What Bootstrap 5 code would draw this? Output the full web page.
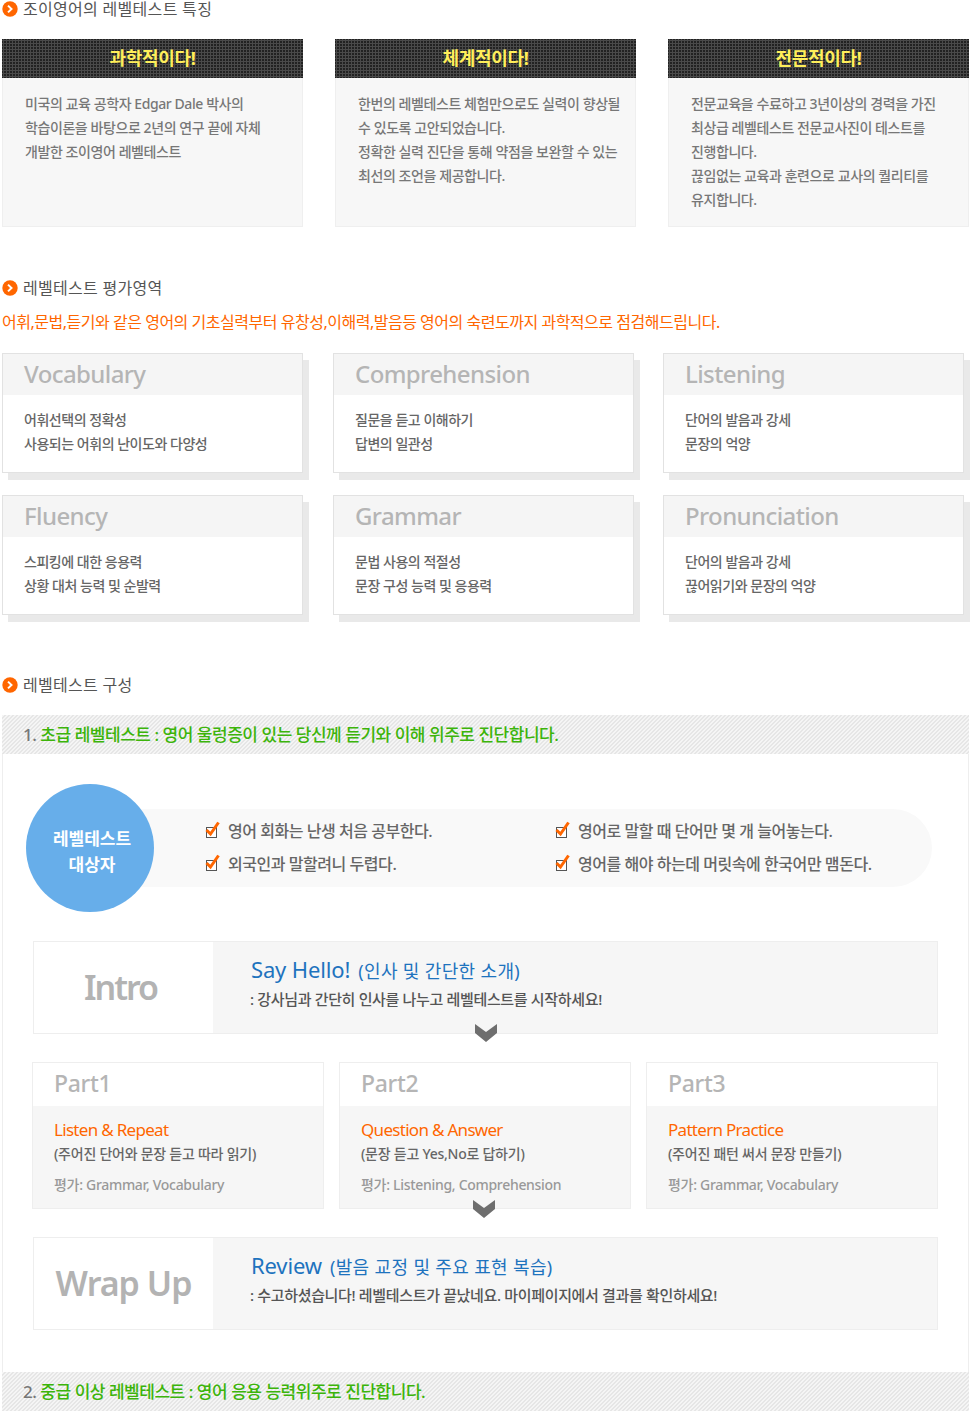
<!DOCTYPE html>
<html lang="ko">
<head>
<meta charset="utf-8">
<title>레벨테스트</title>
<link rel="stylesheet" href="https://cdn.jsdelivr.net/npm/bootstrap@5.3.0/dist/css/bootstrap.min.css">
<style>
body{margin:0;background:#fff;font-family:"Noto Sans","Noto Sans CJK KR",sans-serif;color:#666;width:970px;overflow-x:hidden}
.pg{padding:0 1px 3px 2px}
.sec-t{height:18px;gap:5px;font-size:16px;line-height:18px;color:#555;letter-spacing:.3px}
.sec-t svg{width:16px;height:16px;flex:none}
.feat-row{gap:32px;margin-top:21px}
.feat{width:301px;height:188px;border:0;border-radius:0;background:#f7f7f7;box-shadow:inset 0 0 0 1px #efefef}
.card-header.feat-h{height:39px;border:0;border-radius:0;padding:0;background-color:#222;background-image:radial-gradient(#4a4a4a 1px,transparent 1.2px);background-size:3px 3px;color:#ffef5a;font-size:18px;font-weight:700;line-height:38px;text-align:center;letter-spacing:-.3px}
.feat-b{padding:14px 10px 0 23px;font-size:14px;line-height:24px;letter-spacing:-.42px;color:#777;font-weight:500}
.t2{margin-top:52px}
.lead-o{margin:16px 0 0;height:18px;font-size:16px;line-height:18px;color:#f60;letter-spacing:-.48px;white-space:nowrap;font-weight:400}
.ev-grid{display:grid;grid-template-columns:331px 330px 301px;row-gap:22px;margin-top:22px}
.ev{width:301px;height:120px;border:1px solid #e2e2e2;border-radius:0;box-shadow:6px 7px 0 #e9e9e9;background:#fff}
.card-header.ev-h{height:41px;border:0;border-radius:0;padding:0 21px;background:#f5f5f5;color:#b5b5b5;font-size:24px;font-weight:500;line-height:40px;letter-spacing:-.6px}
.ev-b{padding:13px 21px 0;font-size:14px;line-height:24px;letter-spacing:-.47px;color:#666;font-weight:500}
.t3{margin-top:61px}
.wrapbox{margin-top:21px;border-left:1px solid #eee;border-right:1px solid #eee}
.band{height:39px;margin:0 -1px;padding:1px 0 0 21px;background:linear-gradient(135deg,#f5f5f5 25%,#e6e6e6 25%,#e6e6e6 50%,#f5f5f5 50%,#f5f5f5 75%,#e6e6e6 75%) 0 0/4px 4px;font-size:17px;line-height:38px;font-weight:500;letter-spacing:-.47px;color:#777}
.band b{color:#3cb40a;font-weight:500}
.target{height:128px;margin:30px 0 29px 23px;position:relative;align-items:center}
.circle{width:128px;height:128px;padding:8px 0 0 4px;border-radius:50%;background:#67aeea;color:#fff;font-size:17px;font-weight:700;line-height:26px;text-align:center;letter-spacing:0;position:relative;z-index:1;flex:none}
.pill{width:800px;height:78px;margin-left:-22px;padding:0 0 2px 73px;background:#f9f9f9;border-radius:0 39px 39px 0;font-size:16px;font-weight:500;color:#666;letter-spacing:-.45px;align-content:center;row-gap:9px}
.chk{width:350px;height:24px;gap:8px;white-space:nowrap;line-height:24px}
.chk svg{width:15px;height:17px;flex:none;margin-top:-3px}
.flow{width:905px;height:93px;margin-left:30px;border:1px solid #eee;background:#f6f6f6;position:relative}
.flow-l{width:179px;flex:none;background:#fff;color:#b3b3b3;font-size:34px;font-weight:600;text-align:center;line-height:90px;letter-spacing:-1px}
.flow-i{letter-spacing:-2px;padding-right:6px}
.flow-r{padding:12px 0 0 38px;white-space:nowrap}
.flow-t{font-size:22px;line-height:30px;color:#1e73be;letter-spacing:-.15px}
.flow-t span{font-size:18px;letter-spacing:.35px;margin-left:2.5px}
.flow-d{font-size:15px;line-height:27px;letter-spacing:-.34px;color:#555;font-weight:500;margin-left:-1px}
.parts{width:906px;gap:15px;margin:28px 0 28px 29px}
.part{width:292px;height:147px;border:1px solid #eee;border-radius:0;background:#f6f6f6}
.card-header.part-h{height:43px;border:0;border-radius:0;padding:0 21px;background:#fff;color:#b5b5b5;font-size:23px;font-weight:500;line-height:40px;letter-spacing:-.3px}
.part-b{padding:10px 21px 0;white-space:nowrap;font-size:14px}
.part-e{font-size:17px;line-height:28px;color:#f60;letter-spacing:-.7px}
.part-k{margin-top:-1px;line-height:22px;color:#666;font-weight:500;letter-spacing:-.25px}
.part-g{margin-top:9px;line-height:22px;color:#999;letter-spacing:-.3px;font-weight:500}
.chev{width:24px;height:18px;position:absolute;left:440px;bottom:-9px;z-index:2}
.wrap-w{margin-bottom:42px}
</style>
</head>
<body>
<div class="pg">
  <div class="sec-t d-flex align-items-center"><svg viewBox="0 0 16 16"><circle cx="8" cy="8" r="7.7" fill="#f60"/><path d="M6 4.6 9.5 8 6 11.4" fill="none" stroke="#fff" stroke-width="2"/></svg>조이영어의 레벨테스트 특징</div>
  <div class="feat-row d-flex">
    <div class="card feat"><div class="card-header feat-h">과학적이다!</div><div class="card-body feat-b">미국의 교육 공학자 Edgar Dale 박사의<br>학습이론을 바탕으로 2년의 연구 끝에 자체<br>개발한 조이영어 레벨테스트</div></div>
    <div class="card feat"><div class="card-header feat-h">체계적이다!</div><div class="card-body feat-b">한번의 레벨테스트 체험만으로도 실력이 향상될<br>수 있도록 고안되었습니다.<br>정확한 실력 진단을 통해 약점을 보완할 수 있는<br>최선의 조언을 제공합니다.</div></div>
    <div class="card feat"><div class="card-header feat-h">전문적이다!</div><div class="card-body feat-b">전문교육을 수료하고 3년이상의 경력을 가진<br>최상급 레벨테스트 전문교사진이 테스트를<br>진행합니다.<br>끊임없는 교육과 훈련으로 교사의 퀄리티를<br>유지합니다.</div></div>
  </div>

  <div class="sec-t t2 d-flex align-items-center"><svg viewBox="0 0 16 16"><circle cx="8" cy="8" r="7.7" fill="#f60"/><path d="M6 4.6 9.5 8 6 11.4" fill="none" stroke="#fff" stroke-width="2"/></svg>레벨테스트 평가영역</div>
  <p class="lead-o">어휘,문법,듣기와 같은 영어의 기초실력부터 유창성,이해력,발음등 영어의 숙련도까지 과학적으로 점검해드립니다.</p>
  <div class="ev-grid">
    <div class="card ev"><div class="card-header ev-h">Vocabulary</div><div class="card-body ev-b">어휘선택의 정확성<br>사용되는 어휘의 난이도와 다양성</div></div>
    <div class="card ev"><div class="card-header ev-h">Comprehension</div><div class="card-body ev-b">질문을 듣고 이해하기<br>답변의 일관성</div></div>
    <div class="card ev"><div class="card-header ev-h">Listening</div><div class="card-body ev-b">단어의 발음과 강세<br>문장의 억양</div></div>
    <div class="card ev"><div class="card-header ev-h">Fluency</div><div class="card-body ev-b">스피킹에 대한 응용력<br>상황 대처 능력 및 순발력</div></div>
    <div class="card ev"><div class="card-header ev-h">Grammar</div><div class="card-body ev-b">문법 사용의 적절성<br>문장 구성 능력 및 응용력</div></div>
    <div class="card ev"><div class="card-header ev-h">Pronunciation</div><div class="card-body ev-b">단어의 발음과 강세<br>끊어읽기와 문장의 억양</div></div>
  </div>

  <div class="sec-t t3 d-flex align-items-center"><svg viewBox="0 0 16 16"><circle cx="8" cy="8" r="7.7" fill="#f60"/><path d="M6 4.6 9.5 8 6 11.4" fill="none" stroke="#fff" stroke-width="2"/></svg>레벨테스트 구성</div>
  <div class="wrapbox position-relative">
    <div class="band">1. <b>초급 레벨테스트 : 영어 울렁증이 있는 당신께 듣기와 이해 위주로 진단합니다.</b></div>
    <div class="target d-flex">
      <div class="circle d-flex align-items-center justify-content-center">레벨테스트<br>대상자</div>
      <div class="pill d-flex flex-wrap">
        <div class="chk d-flex align-items-center"><svg viewBox="0 0 15 17"><rect x="1.500" y="6.500" width="10" height="10" fill="#fff" stroke="#555"/><path d="M1.500 9 5.500 13 13.500 1.500" fill="none" stroke="#f60" stroke-width="3"/></svg>영어 회화는 난생 처음 공부한다.</div>
        <div class="chk d-flex align-items-center"><svg viewBox="0 0 15 17"><rect x="1.500" y="6.500" width="10" height="10" fill="#fff" stroke="#555"/><path d="M1.500 9 5.500 13 13.500 1.500" fill="none" stroke="#f60" stroke-width="3"/></svg>영어로 말할 때 단어만 몇 개 늘어놓는다.</div>
        <div class="chk d-flex align-items-center"><svg viewBox="0 0 15 17"><rect x="1.500" y="6.500" width="10" height="10" fill="#fff" stroke="#555"/><path d="M1.500 9 5.500 13 13.500 1.500" fill="none" stroke="#f60" stroke-width="3"/></svg>외국인과 말할려니 두렵다.</div>
        <div class="chk d-flex align-items-center"><svg viewBox="0 0 15 17"><rect x="1.500" y="6.500" width="10" height="10" fill="#fff" stroke="#555"/><path d="M1.500 9 5.500 13 13.500 1.500" fill="none" stroke="#f60" stroke-width="3"/></svg>영어를 해야 하는데 머릿속에 한국어만 맴돈다.</div>
      </div>
    </div>
    <div class="flow d-flex">
      <div class="flow-l flow-i">Intro</div>
      <div class="flow-r"><div class="flow-t">Say Hello! <span>(인사 및 간단한 소개)</span></div><div class="flow-d">: 강사님과 간단히 인사를 나누고 레벨테스트를 시작하세요!</div></div>
      <svg class="chev" viewBox="0 0 24 18"><path d="M1 0 12 8 23 0V9L12 18 1 9Z" fill="#6e6e6e"/></svg>
    </div>
    <div class="parts d-flex position-relative">
      <div class="card part"><div class="card-header part-h">Part1</div><div class="card-body part-b"><div class="part-e">Listen &amp; Repeat</div><div class="part-k">(주어진 단어와 문장 듣고 따라 읽기)</div><div class="part-g">평가: Grammar, Vocabulary</div></div></div>
      <div class="card part"><div class="card-header part-h">Part2</div><div class="card-body part-b"><div class="part-e">Question &amp; Answer</div><div class="part-k">(문장 듣고 Yes,No로 답하기)</div><div class="part-g">평가: Listening, Comprehension</div></div></div>
      <div class="card part"><div class="card-header part-h">Part3</div><div class="card-body part-b"><div class="part-e">Pattern Practice</div><div class="part-k">(주어진 패턴 써서 문장 만들기)</div><div class="part-g">평가: Grammar, Vocabulary</div></div></div>
      <svg class="chev" viewBox="0 0 24 18"><path d="M1 0 12 8 23 0V9L12 18 1 9Z" fill="#6e6e6e"/></svg>
    </div>
    <div class="flow wrap-w d-flex">
      <div class="flow-l">Wrap Up</div>
      <div class="flow-r"><div class="flow-t">Review <span>(발음 교정 및 주요 표현 복습)</span></div><div class="flow-d">: 수고하셨습니다! 레벨테스트가 끝났네요. 마이페이지에서 결과를 확인하세요!</div></div>
    </div>
    <div class="band">2. <b>중급 이상 레벨테스트 : 영어 응용 능력위주로 진단합니다.</b></div>
  </div>
</div>
<script src="https://cdn.jsdelivr.net/npm/bootstrap@5.3.0/dist/js/bootstrap.bundle.min.js"></script>
</body>
</html>
